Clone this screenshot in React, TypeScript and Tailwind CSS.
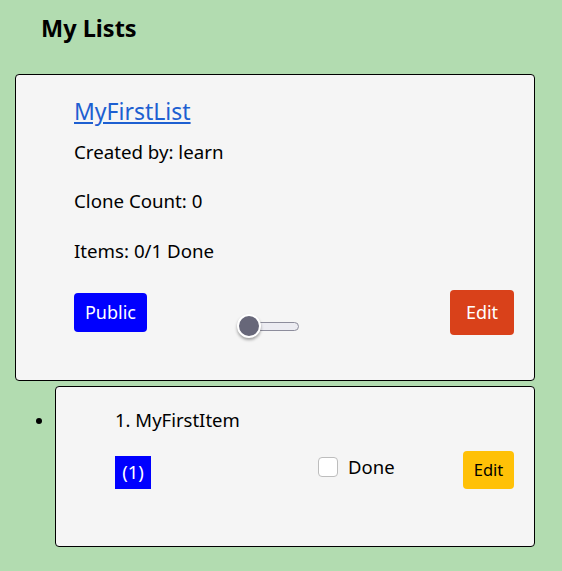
import React, { useState } from "react";

const font = { fontFamily: '"Noto Sans", "Open Sans", sans-serif' };

const ListCard = () => {
  const [isPublic, setIsPublic] = useState(false);
  return (
    <div className="ml-[15px] w-[520px] rounded-[4px] border border-black bg-[#f5f5f5] pl-[58px] pr-[20px] pt-[21px] pb-[45px] text-[18.7px] text-black">
      <a href="#" className="block h-[30px] text-[23px] leading-[30px] text-[#1d5fd1] underline">
        MyFirstList
      </a>
      <p className="mt-[13px] h-[26px] leading-[26px]">Created by: learn</p>
      <p className="mt-[23px] h-[26px] leading-[26px]">Clone Count: 0</p>
      <p className="mt-[24px] h-[26px] leading-[26px]">Items: 0/1 Done</p>
      <div className="mt-[26px] flex h-[45px] items-center">
        <button className="h-[39px] w-[73px] rounded-[4px] bg-[#0000ff] text-[18px] text-white">
          Public
        </button>
        <button
          onClick={() => setIsPublic(!isPublic)}
          className="relative ml-[90px] mt-[27px] h-[24px] w-[62px]"
        >
          <span className="absolute left-[18px] top-[8px] h-[9px] w-[44px] rounded-full border border-[#8d8d9c] bg-[#ececf2]" />
          <span className="absolute left-0 top-0 h-[24px] w-[24px] rounded-full border-[2px] border-white bg-[#676779] shadow-[0_2px_3px_rgba(0,0,0,0.35)]" />
        </button>
        <button className="ml-auto h-[45px] w-[64px] rounded-[4px] bg-[#d9411a] text-[18px] text-white">
          Edit
        </button>
      </div>
    </div>
  );
};

const ItemCard = () => {
  const [done, setDone] = useState(false);
  return (
    <div className="w-[480px] rounded-[4px] border border-black bg-[#f5f5f5] pl-[59px] pr-[20px] pt-[20px] pb-[57px] text-[18.5px] text-black">
      <p className="h-[26px] leading-[26px]">1. MyFirstItem</p>
      <div className="mt-[18px] flex h-[38px] items-center">
        <span className="mt-[4px] flex h-[33px] w-[36px] items-center justify-center bg-[#0000ff] text-white">
          (1)
        </span>
        <label className="ml-[167px] -mt-[7px] flex items-center">
          <input
            type="checkbox"
            checked={done}
            onChange={() => setDone(!done)}
            className="h-[20px] w-[20px] appearance-none rounded-[4px] border border-[#bdbdbd] bg-white"
          />
          <span className="ml-[10px]">Done</span>
        </label>
        <button className="ml-auto h-[38px] w-[51px] rounded-[4px] bg-[#ffc107] text-[16.5px] text-black">
          Edit
        </button>
      </div>
    </div>
  );
};

export default function App() {
  return (
    <div className="h-[571px] w-full bg-[#b2dcb0]" style={font}>
      <h2 className="pl-[41px] pt-[13px] text-[23.5px] font-bold leading-[30px] text-black">My Lists</h2>
      <div className="mt-[31px]">
        <ListCard />
      </div>
      <ul className="mt-[5px] ml-[15px] list-disc pl-[40px] text-[17px]">
        <li>
          <ItemCard />
        </li>
      </ul>
    </div>
  );
}
